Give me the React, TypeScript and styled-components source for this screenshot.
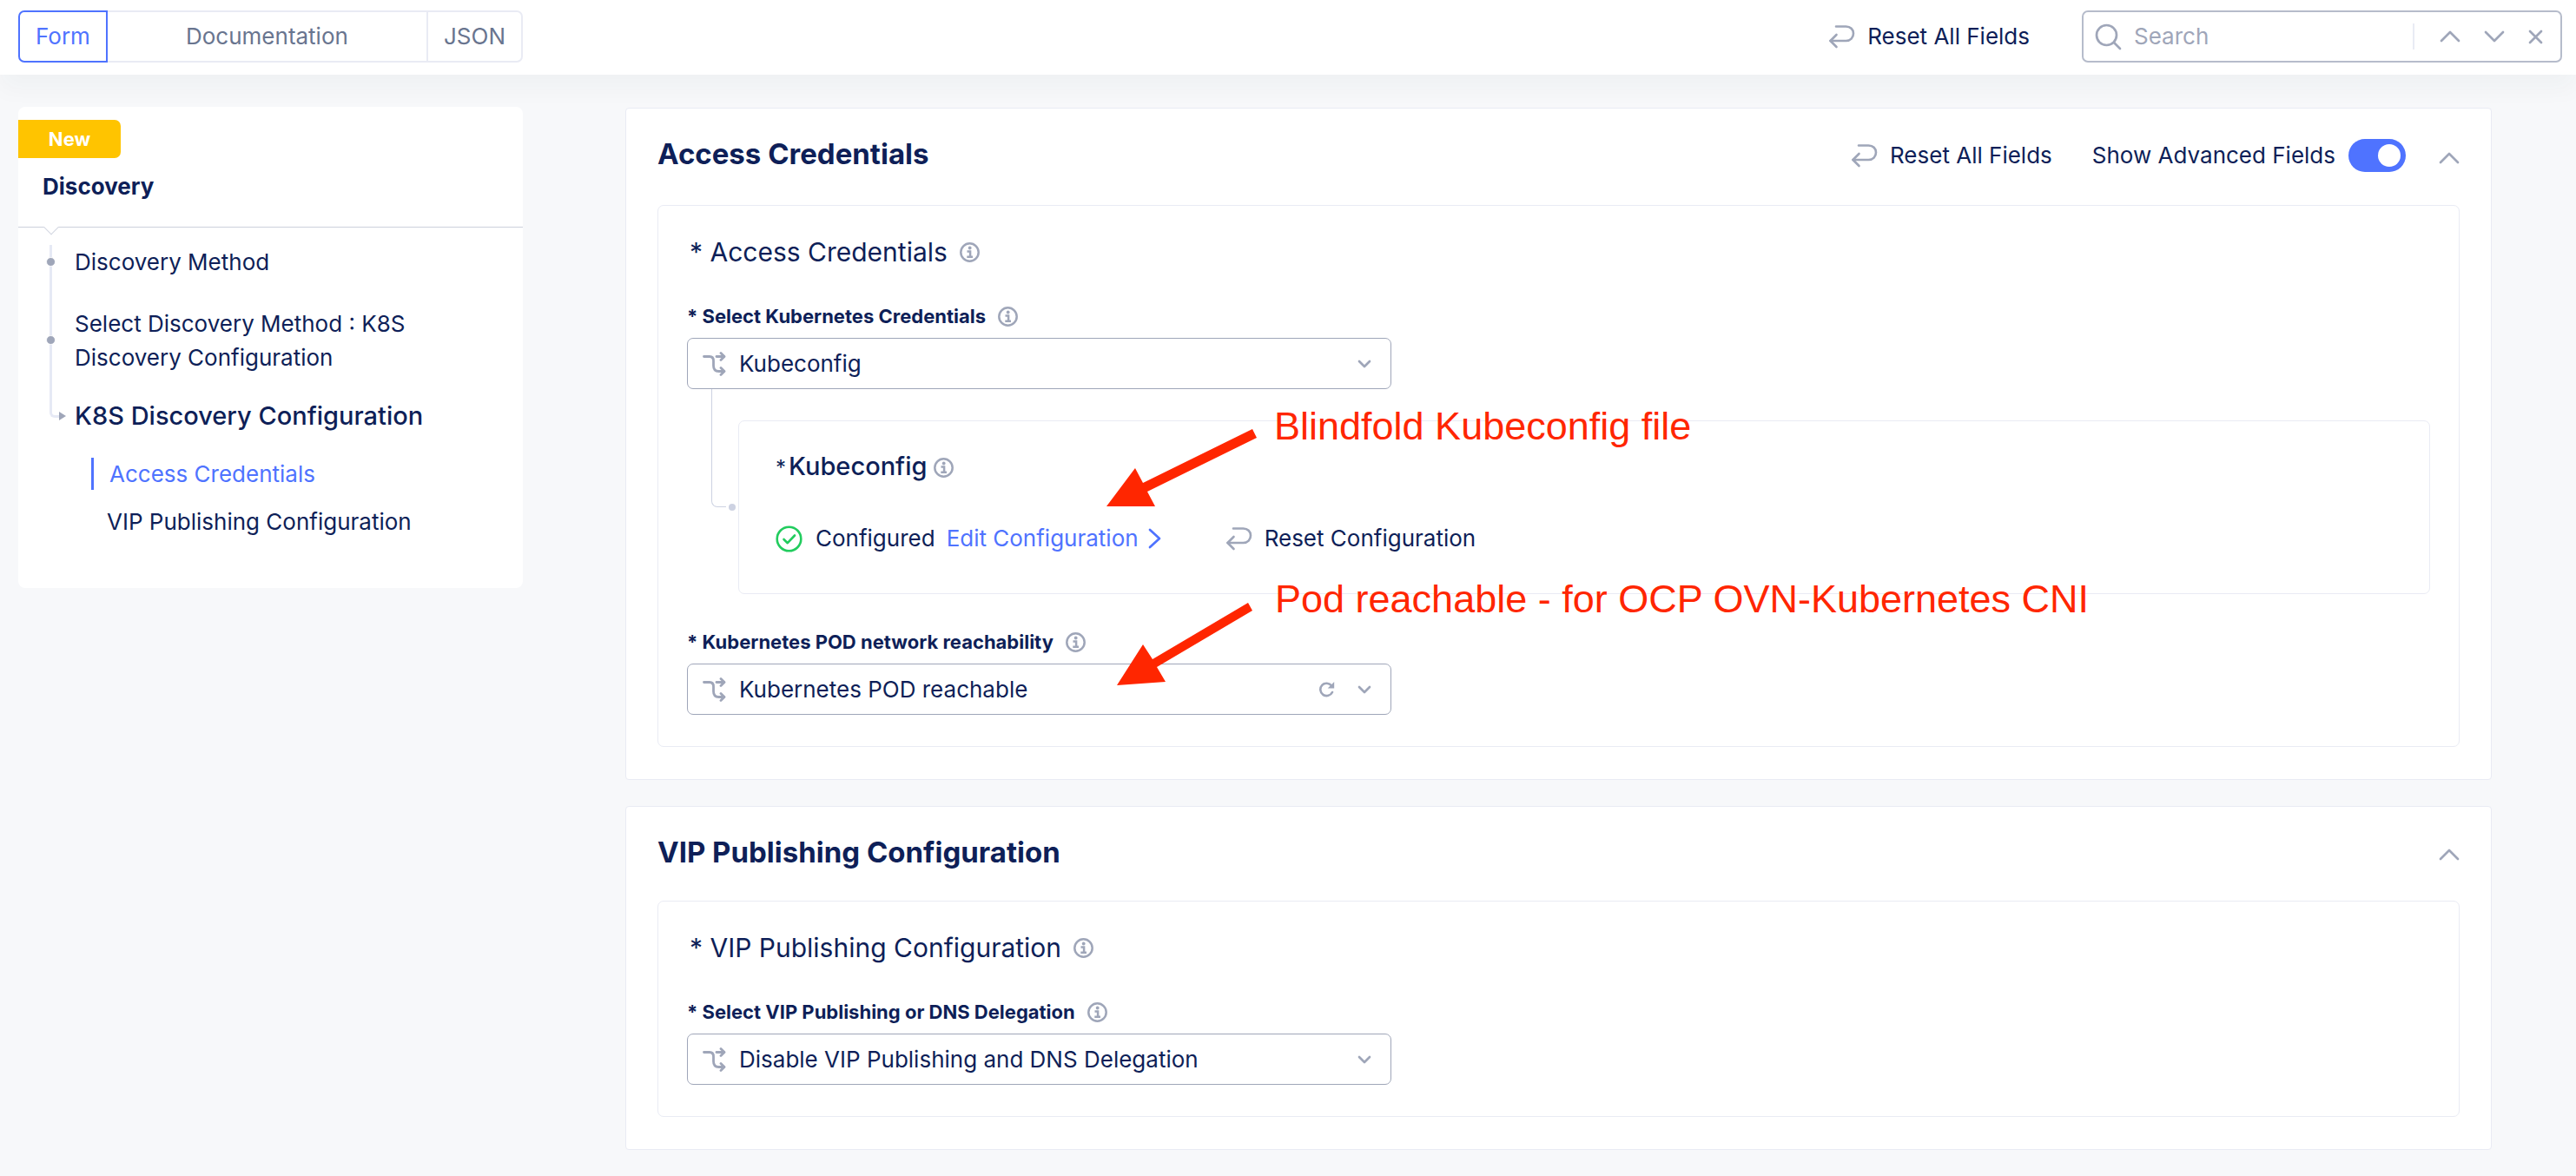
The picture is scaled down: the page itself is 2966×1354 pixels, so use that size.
import React, { useState } from "react";
import styled, { createGlobalStyle, css } from "styled-components";

const color = {
  ink: "#0e1f58",
  blue: "#4f73ff",
  slate: "#69758f",
  grey: "#9fa6b9",
  line: "#e9ebf4",
  rail: "#e6e9f5",
  link: "#cdd2e2",
  page: "#f7f8fa",
  amber: "#ffc400",
  green: "#22cc5e",
  red: "#ff2600",
};

const GlobalStyle = createGlobalStyle`
  *, *::before, *::after { box-sizing: border-box; }
  body {
    margin: 0;
    background: ${color.page};
    color: ${color.ink};
    font-family: Inter, "Liberation Sans", sans-serif;
    font-size: 26px;
    line-height: 40px;
  }
  button, input, select { font: inherit; color: inherit; }
  h1, h2, h3, ul { margin: 0; padding: 0; font-weight: inherit; }
  ul { list-style: none; }
`;

const Header = styled.header`
  position: relative;
  display: flex;
  align-items: center;
  padding: 12px 16px 14px 21px;
  background: #fff;
  box-shadow: 0 16px 28px rgba(40, 45, 60, 0.035);
`;

const Tabs = styled.div`
  display: flex;
  width: 581px;
  height: 60px;
`;

const Tab = styled.button<{ $active?: boolean; $grow?: boolean }>`
  flex: ${(p) => (p.$grow ? "1" : "none")};
  padding: 0 18px;
  border: 2px solid ${color.line};
  border-left-width: 0;
  background: #fff;
  color: ${color.slate};
  cursor: pointer;
  &:first-child { border-left-width: 2px; border-radius: 7px 0 0 7px; }
  &:last-child { border-radius: 0 7px 7px 0; }
  ${(p) => p.$active && css`
    border-color: ${color.blue};
    color: ${color.blue};
  `}
`;

const PlainButton = styled.button`
  display: inline-flex;
  align-items: center;
  gap: 14px;
  padding: 0;
  border: 0;
  background: none;
  cursor: pointer;
`;

const HeaderTools = styled.div`
  display: flex;
  align-items: center;
  gap: 60px;
  margin-left: auto;
`;

const SearchBox = styled.div`
  display: flex;
  align-items: center;
  width: 553px;
  height: 60px;
  padding: 0 20px 0 13px;
  border: 2px solid #b6bccb;
  border-radius: 7px;
`;

const SearchInput = styled.input`
  flex: 1;
  min-width: 0;
  padding: 0;
  margin-left: 14px;
  border: 0;
  outline: 0;
  background: none;
  &::placeholder { color: ${color.grey}; opacity: 1; }
`;

const SearchActions = styled.div`
  display: flex;
  align-items: center;
  gap: 27px;
  height: 30px;
  padding-left: 29px;
  border-left: 2px solid ${color.line};
`;

const Body = styled.div`
  display: flex;
  align-items: flex-start;
  gap: 118px;
  padding: 37px 97px 30px 21px;
`;

const Sidebar = styled.aside`
  flex: none;
  position: relative;
  width: 581px;
  padding-bottom: 58px;
  border-radius: 8px;
  background: #fff;
`;

const SideHead = styled.div`
  position: relative;
  padding: 15px 0 26px;
  border-bottom: 1px solid #ccd1dc;
  &::after {
    content: "";
    position: absolute;
    left: 32px;
    bottom: -7px;
    width: 12px;
    height: 12px;
    border: solid #d3d7e2;
    border-width: 0 1px 1px 0;
    background: #fff;
    transform: rotate(45deg);
  }
`;

const Badge = styled.div`
  width: 118px;
  height: 44px;
  border-radius: 0 7px 7px 0;
  background: ${color.amber};
  color: #fff;
  font-size: 22px;
  font-weight: 700;
  line-height: 44px;
  text-align: center;
`;

const SideTitle = styled.h1`
  padding: 13px 28px 0;
  font-size: 26px;
  font-weight: 700;
`;

const Steps = styled.ul`
  padding: 20px 36px 0;
`;

const Step = styled.li<{ $last?: boolean; $first?: boolean }>`
  position: relative;
  padding: ${(p) => (p.$first ? "0 0 16px 29px" : p.$last ? "12px 0 0 29px" : "16px 0 16px 29px")};
  &::before {
    content: "";
    position: absolute;
    left: 0;
    top: 0;
    width: 3px;
    bottom: 0;
    background: ${color.rail};
    ${(p) => p.$last && css`
      width: 11px;
      height: 34px;
      bottom: auto;
      background: none;
      border: solid ${color.rail};
      border-width: 0 0 3px 3px;
      border-radius: 0 0 0 6px;
    `}
  }
`;

const StepLabel = styled.a<{ $current?: boolean }>`
  position: relative;
  display: block;
  max-width: 420px;
  color: inherit;
  text-decoration: none;
  line-height: 39px;
  &::before {
    content: "";
    position: absolute;
    left: -33px;
    top: 50%;
    width: 11px;
    height: 11px;
    margin-top: -6px;
    border: 1px solid #fff;
    border-radius: 50%;
    background: ${color.grey};
  }
  ${(p) => p.$current && css`
    font-size: 29px;
    font-weight: 500;
    &::before {
      left: -18px;
      width: 0;
      height: 0;
      margin-top: -5px;
      border: solid transparent;
      border-width: 5px 0 5px 8px;
      border-left-color: ${color.grey};
      border-radius: 0;
      background: none;
    }
  `}
`;

const SubSteps = styled.ul`
  display: grid;
  gap: 18px;
  margin-top: 29px;
  padding-left: 19px;
`;

const SubStep = styled.a<{ $active?: boolean }>`
  display: block;
  padding-left: 18px;
  color: ${(p) => (p.$active ? color.blue : "inherit")};
  border-left: ${(p) => (p.$active ? `3px solid ${color.blue}` : "0")};
  text-decoration: none;
  line-height: 37px;
`;

const Main = styled.main`
  display: grid;
  gap: 30px;
  flex: 1;
  min-width: 0;
  padding-top: 1px;
`;

const Card = styled.section`
  padding: 32px 36px 37px;
  border: 1px solid ${color.line};
  border-radius: 4px;
  background: #fff;
`;

const CardHead = styled.div`
  display: flex;
  justify-content: space-between;
  align-items: flex-start;
  margin-bottom: 36px;
`;

const CardTitle = styled.h2`
  font-size: 33px;
  font-weight: 700;
`;

const CardTools = styled.div<{ $tall?: boolean }>`
  display: flex;
  align-items: center;
  min-height: ${(p) => (p.$tall ? "43px" : "40px")};
`;

const SwitchLabel = styled.label`
  display: flex;
  align-items: center;
  gap: 15px;
  margin: 0 38px 0 46px;
`;

const Switch = styled.input`
  appearance: none;
  position: relative;
  width: 66px;
  height: 38px;
  margin: 0;
  border-radius: 19px;
  background: ${color.grey};
  cursor: pointer;
  &::before {
    content: "";
    position: absolute;
    top: 6px;
    left: 6px;
    width: 26px;
    height: 26px;
    border-radius: 50%;
    background: #fff;
  }
  &:checked { background: ${color.blue}; }
  &:checked::before { left: 34px; }
`;

const CollapseButton = styled(PlainButton)`
  padding-top: 6px;
`;

const Panel = styled.div`
  position: relative;
  padding: 33px 33px 36px;
  border: 1px solid ${color.line};
  border-radius: 7px;
`;

const PanelTitle = styled.h3<{ $strong?: boolean }>`
  display: flex;
  align-items: center;
  gap: ${(p) => (p.$strong ? "8px" : "14px")};
  padding-left: ${(p) => (p.$strong ? "0" : "3px")};
  font-size: ${(p) => (p.$strong ? "29px" : "30px")};
  font-weight: ${(p) => (p.$strong ? 500 : 400)};
`;

const SmallStar = styled.span`
  margin-right: 3px;
  font-size: 24px;
  font-weight: 400;
`;

const Field = styled.div<{ $gap: number }>`
  margin-top: ${(p) => p.$gap}px;
`;

const FieldHead = styled.div`
  display: flex;
  align-items: center;
  gap: 14px;
  margin-bottom: 9px;
  font-size: 22px;
  font-weight: 700;
  line-height: 32px;
`;

const SelectBox = styled.div`
  display: flex;
  align-items: center;
  max-width: 811px;
  height: 59px;
  padding: 0 22px 0 17px;
  border: 1px solid ${color.grey};
  border-radius: 7px;
`;

const Select = styled.select`
  appearance: none;
  flex: 1;
  min-width: 0;
  height: 57px;
  margin-left: 15px;
  padding: 0;
  border: 0;
  outline: 0;
  background: none;
`;

const SelectIcons = styled.div`
  display: flex;
  align-items: center;
  gap: 26px;
`;

const Branch = styled.div`
  display: flex;
  align-items: flex-start;
  padding-left: 28px;
`;

const Connector = styled.div`
  position: relative;
  flex: none;
  width: 17px;
  height: 136px;
  margin-right: 14px;
  border: solid ${color.link};
  border-width: 0 0 1px 1px;
  border-radius: 0 0 0 7px;
  &::after {
    content: "";
    position: absolute;
    right: -11px;
    bottom: -5px;
    width: 8px;
    height: 8px;
    border-radius: 50%;
    background: ${color.link};
  }
`;

const SubPanel = styled.div`
  flex: 1;
  margin-top: 36px;
  padding: 32px 42px 43px;
  border: 1px solid ${color.line};
  border-radius: 7px;
`;

const ConfigRow = styled.div`
  display: flex;
  align-items: center;
  margin-top: 41px;
`;

const Status = styled.span`
  display: flex;
  align-items: center;
  gap: 15px;
  margin-right: 13px;
`;

const EditLink = styled.a`
  display: flex;
  align-items: center;
  gap: 11px;
  margin-right: 74px;
  color: ${color.blue};
  text-decoration: none;
`;

const Note = styled.div<{ $left: number; $top: number }>`
  position: absolute;
  left: ${(p) => p.$left}px;
  top: ${(p) => p.$top}px;
  display: flex;
  align-items: flex-start;
  color: ${color.red};
  font-family: "Liberation Sans", Arial, sans-serif;
  font-size: 45px;
  line-height: 50px;
  white-space: nowrap;
  pointer-events: none;
  svg { flex: none; }
`;

const NoteArrow = styled.svg`
  margin-top: 28px;
`;

const ResetIcon = () => (
  <svg width="31" height="28" viewBox="0 0 31 28" fill="none" stroke={color.grey} strokeWidth="2.6" strokeLinecap="round" strokeLinejoin="round">
    <path d="M9 2.500H20.500C25.500 2.500 29 6 29 10.500C29 15.500 25.500 19 20.500 19H2.500" />
    <path d="M9.500 12L2.500 19L9.500 26" />
  </svg>
);

const Chevron = ({ dir, w = 24, h = 14, stroke = color.grey }: { dir: "up" | "down" | "right"; w?: number; h?: number; stroke?: string }) => {
  const d = {
    up: `M2 ${h - 2}L${w / 2} 2L${w - 2} ${h - 2}`,
    down: `M2 2L${w / 2} ${h - 2}L${w - 2} 2`,
    right: `M2 2L${w - 2} ${h / 2}L2 ${h - 2}`,
  }[dir];
  return (
    <svg width={w} height={h} viewBox={`0 0 ${w} ${h}`} fill="none" stroke={stroke} strokeWidth="2.7" strokeLinecap="round" strokeLinejoin="round">
      <path d={d} />
    </svg>
  );
};

const SearchIcon = () => (
  <svg width="31" height="31" viewBox="0 0 31 31" fill="none" stroke={color.grey} strokeWidth="2.7" strokeLinecap="round">
    <circle cx="13.500" cy="13.500" r="11.500" />
    <path d="M22 22L29 29" />
  </svg>
);

const CloseIcon = () => (
  <svg width="17" height="17" viewBox="0 0 17 17" fill="none" stroke={color.grey} strokeWidth="2.7" strokeLinecap="round">
    <path d="M2 2L15 15M15 2L2 15" />
  </svg>
);

const InfoIcon = () => (
  <svg width="23" height="23" viewBox="0 0 23 23" fill="none" stroke={color.grey} strokeWidth="2.5">
    <circle cx="11.500" cy="11.500" r="10.200" />
    <circle cx="11.700" cy="6.500" r="1.900" fill={color.grey} stroke="none" />
    <path d="M8.500 10.500H12.100V16.500M8.300 16.700H15" />
  </svg>
);

const BranchIcon = () => (
  <svg width="27" height="28" viewBox="0 0 27 28" fill="none" stroke={color.grey} strokeWidth="2.8" strokeLinecap="round" strokeLinejoin="round">
    <path d="M1.500 5.500H8C11.500 5.500 12.500 8 12.500 10.500V16C12.500 20 14.500 22.500 18.500 22.500H24.500" />
    <path d="M16 5.500H24.500" />
    <path d="M21 1.500L25 5.500L21 9.500" />
    <path d="M21 18.500L25 22.500L21 26.500" />
  </svg>
);

const CheckIcon = () => (
  <svg width="31" height="31" viewBox="0 0 31 31" fill="none" stroke={color.green} strokeWidth="2.6" strokeLinecap="round" strokeLinejoin="round">
    <circle cx="15.500" cy="15.500" r="13.800" />
    <path d="M9.500 16L13.800 20.200L22 11.500" />
  </svg>
);

const RefreshIcon = () => (
  <svg width="19" height="19" viewBox="0 0 19 19" fill="none" stroke={color.grey} strokeWidth="2.6" strokeLinecap="round">
    <path d="M15.200 5.500A7.200 7.200 0 1 0 16 13" />
    <path d="M18.200 1V8.500H10.700Z" fill={color.grey} stroke="none" />
  </svg>
);

const FieldSelect = ({ id, label, value, gap, refresh }: { id: string; label: string; value: string; gap: number; refresh?: boolean }) => (
  <Field $gap={gap}>
    <FieldHead>
      <label htmlFor={id}>* {label}</label>
      <InfoIcon />
    </FieldHead>
    <SelectBox>
      <BranchIcon />
      <Select id={id} defaultValue={value}>
        <option>{value}</option>
      </Select>
      <SelectIcons>
        {refresh && <PlainButton aria-label="Refresh"><RefreshIcon /></PlainButton>}
        <Chevron dir="down" w={16} h={10} />
      </SelectIcons>
    </SelectBox>
  </Field>
);

export default function App() {
  const [advanced, setAdvanced] = useState(true);
  return (
    <>
      <GlobalStyle />
      <Header>
        <Tabs>
          <Tab $active>Form</Tab>
          <Tab $grow>Documentation</Tab>
          <Tab>JSON</Tab>
        </Tabs>
        <HeaderTools>
          <PlainButton><ResetIcon />Reset All Fields</PlainButton>
          <SearchBox>
            <SearchIcon />
            <SearchInput type="text" placeholder="Search" aria-label="Search" />
            <SearchActions>
              <PlainButton aria-label="Previous match"><Chevron dir="up" /></PlainButton>
              <PlainButton aria-label="Next match"><Chevron dir="down" /></PlainButton>
              <PlainButton aria-label="Clear search"><CloseIcon /></PlainButton>
            </SearchActions>
          </SearchBox>
        </HeaderTools>
      </Header>
      <Body>
        <Sidebar>
          <SideHead>
            <Badge>New</Badge>
            <SideTitle>Discovery</SideTitle>
          </SideHead>
          <Steps>
            <Step $first><StepLabel href="#method">Discovery Method</StepLabel></Step>
            <Step><StepLabel href="#select">Select Discovery Method : K8S Discovery Configuration</StepLabel></Step>
            <Step $last>
              <StepLabel href="#k8s" $current>K8S Discovery Configuration</StepLabel>
              <SubSteps>
                <li><SubStep href="#access" $active>Access Credentials</SubStep></li>
                <li><SubStep href="#vip">VIP Publishing Configuration</SubStep></li>
              </SubSteps>
            </Step>
          </Steps>
        </Sidebar>
        <Main>
          <Card id="access">
            <CardHead>
              <CardTitle>Access Credentials</CardTitle>
              <CardTools $tall>
                <PlainButton><ResetIcon />Reset All Fields</PlainButton>
                <SwitchLabel>
                  Show Advanced Fields
                  <Switch type="checkbox" role="switch" checked={advanced} onChange={(e) => setAdvanced(e.target.checked)} />
                </SwitchLabel>
                <CollapseButton aria-label="Collapse Access Credentials"><Chevron dir="up" /></CollapseButton>
              </CardTools>
            </CardHead>
            <Panel>
              <PanelTitle>* Access Credentials <InfoIcon /></PanelTitle>
              <FieldSelect id="credentials" label="Select Kubernetes Credentials" value="Kubeconfig" gap={38} />
              <Branch>
                <Connector />
                <SubPanel>
                  <PanelTitle $strong><span><SmallStar>*</SmallStar>Kubeconfig</span> <InfoIcon /></PanelTitle>
                  <ConfigRow>
                    <Status><CheckIcon />Configured</Status>
                    <EditLink href="#edit">Edit Configuration <Chevron dir="right" w={15} h={24} stroke={color.blue} /></EditLink>
                    <PlainButton><ResetIcon />Reset Configuration</PlainButton>
                  </ConfigRow>
                </SubPanel>
              </Branch>
              <FieldSelect id="reachability" label="Kubernetes POD network reachability" value="Kubernetes POD reachable" gap={39} refresh />
              <Note $left={516} $top={229}>
                <NoteArrow width="193" height="92" viewBox="0 0 193 92" fill={color.red}>
                  <path d="M0 89L33 45L42 62L168 0L173 10L47 72L56 89Z" />
                </NoteArrow>
                <span>Blindfold Kubeconfig file</span>
              </Note>
              <Note $left={528} $top={428}>
                <NoteArrow width="182" height="97" viewBox="0 0 182 97" fill={color.red}>
                  <path d="M0 96L30 49L41 66L151 1L156 10L46 75L56 92Z" />
                </NoteArrow>
                <span>Pod reachable - for OCP OVN-Kubernetes CNI</span>
              </Note>
            </Panel>
          </Card>
          <Card id="vip">
            <CardHead>
              <CardTitle>VIP Publishing Configuration</CardTitle>
              <CardTools>
                <CollapseButton aria-label="Collapse VIP Publishing Configuration"><Chevron dir="up" /></CollapseButton>
              </CardTools>
            </CardHead>
            <Panel>
              <PanelTitle>* VIP Publishing Configuration <InfoIcon /></PanelTitle>
              <FieldSelect id="delegation" label="Select VIP Publishing or DNS Delegation" value="Disable VIP Publishing and DNS Delegation" gap={38} />
            </Panel>
          </Card>
        </Main>
      </Body>
    </>
  );
}
